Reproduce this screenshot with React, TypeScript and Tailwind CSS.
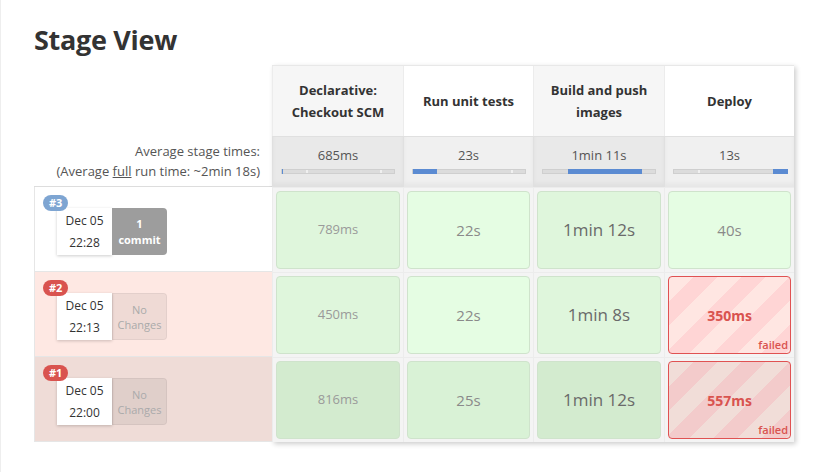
import React from "react";

type Cell = { text: string; size: string; color: string; failed?: boolean };

interface Run {
   id: number;
   date: string;
   time: string;
   commits: number;
   rowBg: string;
   badge: string;
   cells: Cell[];
}

const stages = [
   { name: "Declarative: Checkout SCM", avg: "685ms", from: 0, width: 1, ticks: [24, 98] },
   { name: "Run unit tests", avg: "23s", from: 0, width: 24, ticks: [98] },
   { name: "Build and push images", avg: "1min 11s", from: 25, width: 74, ticks: [] },
   { name: "Deploy", avg: "13s", from: 99, width: 15, ticks: [24] },
];

const runs: Run[] = [
   {
      id: 3,
      date: "Dec 05",
      time: "22:28",
      commits: 1,
      rowBg: "bg-white",
      badge: "bg-[#7ea5d2]",
      cells: [
         { text: "789ms", size: "text-[13px]", color: "text-[#9a9a9a]" },
         { text: "22s", size: "text-[15px]", color: "text-[#8a8a8a]" },
         { text: "1min 12s", size: "text-[17px]", color: "text-[#6a6a6a]" },
         { text: "40s", size: "text-[15px]", color: "text-[#8a8a8a]" },
      ],
   },
   {
      id: 2,
      date: "Dec 05",
      time: "22:13",
      commits: 0,
      rowBg: "bg-[#fee8e3]",
      badge: "bg-[#d9534f]",
      cells: [
         { text: "450ms", size: "text-[13px]", color: "text-[#9a9a9a]" },
         { text: "22s", size: "text-[15px]", color: "text-[#8a8a8a]" },
         { text: "1min 8s", size: "text-[17px]", color: "text-[#6a6a6a]" },
         { text: "350ms", size: "text-[14px]", color: "text-[#d9534f]", failed: true },
      ],
   },
   {
      id: 1,
      date: "Dec 05",
      time: "22:00",
      commits: 0,
      rowBg: "bg-[#efdcd7]",
      badge: "bg-[#d9534f]",
      cells: [
         { text: "816ms", size: "text-[13px]", color: "text-[#9a9a9a]" },
         { text: "25s", size: "text-[15px]", color: "text-[#8a8a8a]" },
         { text: "1min 12s", size: "text-[17px]", color: "text-[#6a6a6a]" },
         { text: "557ms", size: "text-[14px]", color: "text-[#d9534f]", failed: true },
      ],
   },
];

const okBg = [
   ["bg-[#dff6dc]", "bg-[#e5fde3]", "bg-[#dff6dc]", "bg-[#e5fde3]"],
   ["bg-[#dff6dc]", "bg-[#e5fde3]", "bg-[#dff6dc]", "bg-[#e5fde3]"],
   ["bg-[#d3ebcf]", "bg-[#d9f2d6]", "bg-[#d3ebcf]", "bg-[#d9f2d6]"],
];

const failBg = [
   "bg-[repeating-linear-gradient(135deg,#ffe6e2_0px,#ffe6e2_17px,#ffd5d5_17px,#ffd5d5_34px)]",
   "bg-[repeating-linear-gradient(135deg,#f1ddd8_0px,#f1ddd8_17px,#f3cbcb_17px,#f3cbcb_34px)]",
];

const App: React.FC = () => {
   return (
      <div className="w-[817px] h-[472px] bg-white border-l border-[#eeeeee] font-['Open_Sans','Noto_Sans',sans-serif] text-[#333]">
         <h1 className="pl-[33px] pt-[22px] h-[65px] text-[27px] font-bold leading-[36px] text-[#333] tracking-[-0.3px]">
            Stage View
         </h1>
         <div className="flex pl-[33px]">
            {/* left column */}
            <div className="w-[238px] flex flex-col">
               <div className="h-[71px]" />
               <div className="h-[51px] flex flex-col items-end justify-center pr-[12px] text-[13px] leading-[20px] text-[#555] border-b border-[#dddddd]">
                  <span>Average stage times:</span>
                  <span>
                     (Average <u>full</u> run time: ~2min 18s)
                  </span>
               </div>
               {runs.map((run) => (
                  <div
                     key={run.id}
                     className={`h-[85px] ${run.rowBg} border-l border-b border-[#e6e6e6] pt-[21px] pl-[22px] relative`}
                  >
                     <span
                        className={`absolute left-[8px] top-[8px] ${run.badge} text-white text-[11px] font-bold leading-[16px] px-[6px] rounded-full`}
                     >
                        #{run.id}
                     </span>
                     <div className="flex h-[47px]">
                        <div className="w-[55px] bg-white shadow-[0_1px_3px_rgba(0,0,0,0.2)] flex flex-col items-center justify-center gap-[4px] text-[12px] leading-[18px] text-[#333]">
                           <span>{run.date}</span>
                           <span>{run.time}</span>
                        </div>
                        {run.commits > 0 ? (
                           <div className="w-[55px] bg-[#9d9d9d] rounded-r-[4px] flex flex-col items-center justify-center text-white text-[11px] font-bold leading-[16px]">
                              <span>{run.commits}</span>
                              <span>commit</span>
                           </div>
                        ) : (
                           <div className="w-[55px] bg-[rgba(0,0,0,0.06)] border border-[rgba(0,0,0,0.05)] rounded-r-[4px] flex flex-col items-center justify-center text-[#aaa] text-[11px] leading-[15px]">
                              <span>No</span>
                              <span>Changes</span>
                           </div>
                        )}
                     </div>
                  </div>
               ))}
            </div>

            {/* stage table */}
            <div className="w-[522px] shadow-[2px_2px_5px_rgba(0,0,0,0.2)] border-t border-r border-[#e8e8e8] grid grid-cols-[131px_130px_131px_130px]">
               {stages.map((s, i) => (
                  <div
                     key={s.name}
                     className={`h-[70px] flex items-center justify-center text-center px-[12px] text-[13px] font-bold leading-[22px] text-[#333] border-l border-[#ececec] ${
                        i % 2 === 0 ? "bg-[#f6f6f6]" : "bg-white"
                     }`}
                  >
                     {s.name}
                  </div>
               ))}
               {stages.map((s, i) => (
                  <div
                     key={s.name + "avg"}
                     className={`h-[51px] flex flex-col items-center pt-[9px] border-l border-t border-[#e0e0e0] shadow-[inset_0_-4px_4px_rgba(0,0,0,0.04)] ${
                        i % 2 === 0 ? "bg-[#e9e9e9]" : "bg-[#f0f0f0]"
                     }`}
                  >
                     <span className="text-[13px] leading-[18px] text-[#555]">
                        {s.avg}
                     </span>
                     <div className="mt-[5px] w-[114px] h-[5px] bg-[#dcdcdc] border border-[#cfcfcf] relative">
                        {s.ticks.map((t) => (
                           <span
                              key={t}
                              className="absolute top-0 bottom-0 w-[2px] bg-[#f0f0f0]"
                              style={{ left: t }}
                           />
                        ))}
                        <span
                           className="absolute top-[-1px] bottom-[-1px] bg-[#5b8bd2]"
                           style={{ left: s.from, width: s.width }}
                        />
                     </div>
                  </div>
               ))}
               {runs.map((run, r) =>
                  run.cells.map((c, i) => (
                     <div
                        key={`${run.id}-${i}`}
                        className="h-[85px] p-[3px] border-l border-t border-[#ececec] bg-[#f4f4f4]"
                     >
                        {c.failed ? (
                           <div
                              className={`h-full rounded-[4px] border border-[#e05252] relative flex items-center justify-center ${failBg[r - 1]}`}
                           >
                              <span className={`${c.size} ${c.color} font-bold`}>
                                 {c.text}
                              </span>
                              <span className="absolute right-[2px] bottom-[1px] text-[11px] font-semibold text-[#d9534f] leading-[14px]">
                                 failed
                              </span>
                           </div>
                        ) : (
                           <div
                              className={`h-full rounded-[4px] border border-[#cfe3cc] flex items-center justify-center ${okBg[r][i]}`}
                           >
                              <span className={`${c.size} ${c.color}`}>
                                 {c.text}
                              </span>
                           </div>
                        )}
                     </div>
                  ))
               )}
            </div>
         </div>
      </div>
   );
};

export default App;
